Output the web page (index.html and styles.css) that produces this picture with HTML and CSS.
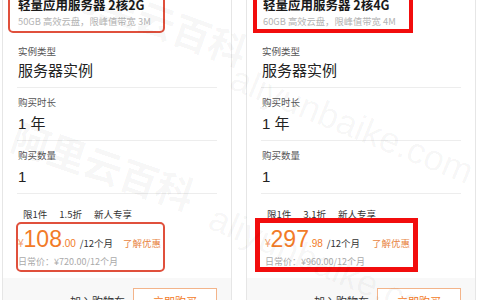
FILE: index.html
```html
<!DOCTYPE html>
<html lang="zh-CN">
<head>
<meta charset="utf-8">
<title>轻量应用服务器</title>
<link rel="stylesheet" href="styles.css">
</head>
<body>
<div class="page">
  <div class="card">
    <div class="spec spec-soft">
      <div class="spec-title">轻量应用服务器 2核2G</div>
      <div class="spec-sub">50GB 高效云盘，限峰值带宽 3M</div>
    </div>
    <div class="field field-first">
      <div class="field-label">实例类型</div>
      <div class="field-value">服务器实例</div>
    </div>
    <div class="field">
      <div class="field-label">购买时长</div>
      <div class="field-value">1 年</div>
    </div>
    <div class="field">
      <div class="field-label">购买数量</div>
      <div class="field-value">1</div>
    </div>
    <div class="tags"><span>限1件</span><span>1.5折</span><span>新人专享</span></div>
    <div class="price-box price-soft">
      <div class="price-row">
        <span class="amount"><span class="yen">¥</span><span class="int">108</span><span class="dec">.00</span><span class="per">/12个月</span></span>
        <span class="promo">了解优惠</span>
      </div>
      <div class="regular">日常价：¥720.00/12个月</div>
    </div>
    <div class="actions">
      <span class="cart">加入购物车</span>
      <span class="buy">立即购买</span>
    </div>
  </div>

  <div class="card">
    <div class="spec spec-hard">
      <div class="spec-title">轻量应用服务器 2核4G</div>
      <div class="spec-sub">60GB 高效云盘，限峰值带宽 4M</div>
    </div>
    <div class="field field-first">
      <div class="field-label">实例类型</div>
      <div class="field-value">服务器实例</div>
    </div>
    <div class="field">
      <div class="field-label">购买时长</div>
      <div class="field-value">1 年</div>
    </div>
    <div class="field">
      <div class="field-label">购买数量</div>
      <div class="field-value">1</div>
    </div>
    <div class="tags"><span>限1件</span><span>3.1折</span><span>新人专享</span></div>
    <div class="price-box price-hard">
      <div class="price-row">
        <span class="amount"><span class="yen">¥</span><span class="int">297</span><span class="dec">.98</span><span class="per">/12个月</span></span>
        <span class="promo">了解优惠</span>
      </div>
      <div class="regular">日常价：¥960.00/12个月</div>
    </div>
    <div class="actions">
      <span class="cart">加入购物车</span>
      <span class="buy">立即购买</span>
    </div>
  </div>
</div>
<div class="watermark wm-cjk wm-cjk-a">阿里云百科</div>
<div class="watermark wm-latin wm-latin-a">aliyunbaike.com</div>
<div class="watermark wm-cjk wm-cjk-b">阿里云百科</div>
<div class="watermark wm-latin wm-latin-b">aliyunbaike.com</div>
</body>
</html>
```

FILE: styles.css
```css
* { box-sizing: border-box; }
html, body { margin: 0; padding: 0; background: #fff; }
body {
  position: relative;
  width: 480px;
  height: 300px;
  overflow: hidden;
  font-family: "Noto Sans CJK SC", "Noto Sans", sans-serif;
  color: #333;
}
.page {
  display: flex;
  gap: 14px;
  padding-left: 2px;
  margin-top: -20px;
}
.card {
  width: 230px;
  height: 345px;
  border: 1px solid #e6e6e6;
  display: flex;
  flex-direction: column;
}
.spec { margin-top: 8px; }
.spec-soft {
  width: 157px;
  margin-left: 5px;
  border: 2px solid #e0503c;
  border-radius: 5px;
  padding: 6px 8px 4px;
}
.spec-hard {
  width: 160px;
  margin-left: 6px;
  border: 4px solid #f20d0d;
  padding: 4px 6px 2px;
}
.spec-title {
  font-size: 12.5px;
  line-height: 16px;
  font-weight: 700;
  color: #1a1a1a;
  white-space: nowrap;
}
.spec-sub {
  margin-top: 2px;
  font-size: 9.3px;
  line-height: 12px;
  color: #b3b3b3;
  white-space: nowrap;
}
.field {
  margin: 0 14px;
  padding: 7px 1px 5px;
  border-bottom: 1px solid #ededed;
}
.field-first { padding-top: 11px; }
.field-label {
  font-size: 9.5px;
  line-height: 14px;
  color: #555;
}
.field-value {
  margin-top: 4px;
  font-family: "Liberation Sans", "Noto Sans CJK SC", sans-serif;
  font-size: 15px;
  line-height: 22px;
  color: #222;
}
.field-first .field-value { margin-top: 2px; }
.tags {
  display: flex;
  gap: 12px;
  padding: 13px 0 0 20px;
  font-size: 9.5px;
  line-height: 14px;
  color: #333;
}
.price-soft {
  width: 149px;
  margin: 1px 0 0 13px;
  border: 2px solid #e0503c;
  border-radius: 5px;
  padding: 2px 2px 3px 0;
}
.price-hard {
  width: 163px;
  margin: -3px 0 0 8px;
  border: 5px solid #f20d0d;
  padding: 3px 3px 0 5px;
}
.price-row {
  display: flex;
  justify-content: space-between;
  align-items: baseline;
}
.amount {
  font-family: "Liberation Sans", "Noto Sans CJK SC", sans-serif;
  font-size: 23px;
  line-height: 26px;
  color: #f27b28;
  white-space: nowrap;
}
.yen {
  font-size: 10px;
  line-height: 10px;
  color: #f0a070;
}
.dec {
  font-size: 10px;
  line-height: 10px;
}
.per {
  margin-left: 4px;
  font-family: "Noto Sans CJK SC", sans-serif;
  font-size: 9.5px;
  line-height: 10px;
  color: #333;
}
.promo {
  font-size: 9.5px;
  line-height: 10px;
  color: #e8843f;
}
.regular {
  margin-top: 5px;
  font-size: 9px;
  line-height: 10px;
  color: #aaa;
  white-space: nowrap;
}
.actions {
  flex: 1;
  margin-top: 6px;
  padding: 10px 14px 0 0;
  background: #f8f8f8;
  display: flex;
  justify-content: flex-end;
  align-items: flex-start;
  gap: 8px;
}
.cart {
  font-size: 11px;
  line-height: 26px;
  color: #333;
}
.buy {
  width: 84px;
  height: 26px;
  border: 1px solid #f3b48a;
  background: #fff;
  color: #f27b28;
  font-size: 11px;
  display: flex;
  align-items: center;
  justify-content: center;
}
.watermark {
  position: absolute;
  left: 0;
  top: 0;
  pointer-events: none;
  transform-origin: 0 0;
  white-space: nowrap;
  line-height: 1;
  color: rgba(0, 0, 0, 0.045);
}
.wm-cjk {
  font-size: 38px;
  font-weight: 700;
}
.wm-latin {
  font-family: "Liberation Sans", sans-serif;
  font-size: 36px;
  font-weight: 400;
}
.wm-cjk-a { left: 74px; top: -31px; transform: rotate(20deg); }
.wm-latin-a { left: 239px; top: 60px; transform: rotate(22deg); }
.wm-cjk-b { left: 20px; top: 116px; transform: rotate(19deg); }
.wm-latin-b { left: 218px; top: 200px; transform: rotate(23deg); }
```
